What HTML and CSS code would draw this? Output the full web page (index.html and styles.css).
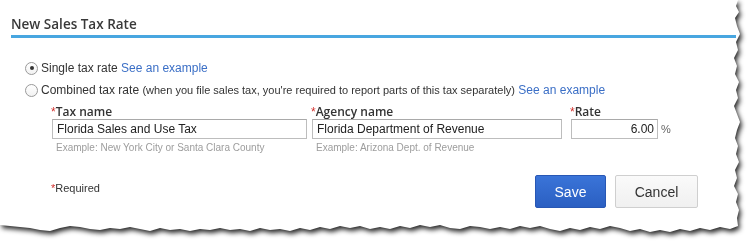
FILE: index.html
```html
<!DOCTYPE html>
<html>
<head>
<meta charset="utf-8">
<link rel="stylesheet" href="styles.css">
</head>
<body>
<div class="shadow">
  <div class="paper">
    <div class="header"><h1 class="title">New Sales Tax Rate</h1></div>
    <div class="options">
      <label class="option"><span class="radio checked"></span><span>Single tax rate <a class="link">See an example</a></span></label>
      <label class="option"><span class="radio"></span><span>Combined tax rate <span class="note">(when you file sales tax, you're required to report parts of this tax separately)</span> <a class="link">See an example</a></span></label>
    </div>
    <div class="fields">
      <div class="field f-name">
        <div class="label"><span class="req">*</span>Tax name</div>
        <div class="input">Florida Sales and Use Tax</div>
        <div class="hint">Example: New York City or Santa Clara County</div>
      </div>
      <div class="field f-agency">
        <div class="label"><span class="req">*</span>Agency name</div>
        <div class="input">Florida Department of Revenue</div>
        <div class="hint">Example: Arizona Dept. of Revenue</div>
      </div>
      <div class="field f-rate">
        <div class="label"><span class="req">*</span>Rate</div>
        <div class="rate-row"><div class="input num">6.00</div><span class="pct">%</span></div>
      </div>
    </div>
    <div class="footer">
      <div class="required"><span class="req">*</span>Required</div>
      <div class="buttons">
        <button class="btn primary">Save</button>
        <button class="btn secondary">Cancel</button>
      </div>
    </div>
  </div>
</div>
</body>
</html>
```

FILE: styles.css
```css
html, body {
  margin: 0;
  padding: 0;
  background: #ffffff;
  width: 750px;
  height: 248px;
  overflow: hidden;
}
body {
  font-family: "Liberation Sans", Arial, sans-serif;
  color: #333;
}
.shadow {
  width: 750px;
  height: 248px;
  filter: drop-shadow(2px 3px 2.5px rgba(0,0,0,0.85));
}
.paper {
  width: 742px;
  height: 238px;
  background: #fff;
  display: flex;
  flex-direction: column;
  clip-path: polygon(0px 0px, 738px 0px, 736px 6px, 739px 12px, 735px 18px, 737px 26px, 740px 34px, 736px 42px, 738px 50px, 734px 58px, 737px 66px, 735px 74px, 739px 82px, 736px 90px, 738px 98px, 734px 106px, 737px 114px, 740px 122px, 737px 130px, 735px 138px, 738px 146px, 736px 154px, 739px 162px, 735px 170px, 737px 178px, 734px 186px, 738px 194px, 736px 202px, 739px 210px, 737px 218px, 738px 226px, 730px 229px, 720px 227px, 710px 230px, 700px 228px, 690px 231px, 680px 229px, 670px 232px, 660px 230px, 650px 232px, 640px 229px, 630px 231px, 620px 228px, 610px 226px, 600px 229px, 590px 227px, 580px 230px, 570px 228px, 560px 231px, 550px 229px, 540px 226px, 530px 228px, 520px 226px, 510px 229px, 500px 227px, 490px 229px, 480px 227px, 470px 226px, 460px 229px, 450px 228px, 440px 225px, 430px 227px, 420px 225px, 410px 228px, 400px 226px, 390px 229px, 380px 227px, 370px 229px, 360px 226px, 350px 228px, 340px 226px, 330px 229px, 320px 227px, 310px 230px, 300px 228px, 290px 231px, 280px 229px, 270px 230px, 260px 228px, 250px 231px, 240px 229px, 230px 230px, 220px 228px, 210px 230px, 200px 229px, 190px 231px, 180px 229px, 170px 230px, 160px 228px, 150px 231px, 140px 229px, 130px 227px, 120px 229px, 110px 228px, 100px 230px, 90px 229px, 80px 227px, 70px 226px, 60px 228px, 50px 231px, 40px 230px, 30px 228px, 20px 227px, 10px 226px, 0px 225px);
}
.header {
  margin: 0 6px 0 11px;
  border-bottom: 3px solid #48a6e0;
  box-sizing: border-box;
  height: 38px;
}
.title {
  margin: 0;
  padding-top: 15px;
  font-family: "Open Sans", sans-serif;
  font-weight: 600;
  font-size: 13.5px;
  line-height: 18px;
  color: #393939;
}
.options {
  display: flex;
  flex-direction: column;
  padding: 19px 0 0 25px;
}
.option {
  display: flex;
  align-items: center;
  height: 22px;
  font-size: 12px;
  color: #333;
}
.radio {
  width: 11px;
  height: 11px;
  border: 1px solid #9a9a9a;
  border-radius: 50%;
  margin-right: 3px;
  display: flex;
  align-items: center;
  justify-content: center;
  background: linear-gradient(#fff, #f2f2f2);
  flex: none;
}
.radio.checked::after {
  content: "";
  width: 4px;
  height: 4px;
  border-radius: 50%;
  background: #333;
}
.note {
  font-size: 11px;
}
.link {
  color: #3b6fc6;
}
.fields {
  display: flex;
  padding: 4px 0 0 51px;
}
.field {
  display: flex;
  flex-direction: column;
}
.f-name { width: 256px; margin-right: 4px; }
.f-agency { width: 251px; margin-right: 8px; }
.label {
  font-family: "Open Sans", sans-serif;
  font-weight: 600;
  font-size: 12px;
  line-height: 14px;
  height: 14px;
  color: #333;
  margin-bottom: 0;
}
.req {
  color: #d3312d;
  font-family: "Liberation Sans", Arial, sans-serif;
  font-weight: normal;
}
.input {
  height: 20px;
  box-sizing: border-box;
  border: 1px solid #bdbdbd;
  border-top-color: #a9a9a9;
  margin-left: 1px;
  padding: 0 0 0 4px;
  font-size: 12px;
  line-height: 18px;
  color: #222;
  background: #fff;
}
.hint {
  font-size: 10px;
  line-height: 12px;
  color: #9d9d9d;
  padding-left: 5px;
  margin-top: 3px;
}
.rate-row {
  display: flex;
  align-items: center;
}
.input.num {
  width: 87px;
  text-align: right;
  padding: 0 3px 0 0;
}
.pct {
  font-size: 11px;
  color: #666;
  margin-left: 3px;
}
.footer {
  display: flex;
  justify-content: space-between;
  align-items: flex-start;
  padding: 21px 0 0 51px;
  width: 647px;
}
.required {
  font-size: 11px;
  color: #333;
  margin-top: 7px;
}
.buttons {
  display: flex;
  gap: 9px;
}
.btn {
  height: 33px;
  font-family: "Liberation Sans", Arial, sans-serif;
  font-size: 14px;
  border-radius: 2px;
  padding: 0;
}
.primary {
  width: 71px;
  color: #fff;
  background: linear-gradient(#3a74d8, #2b5fc2);
  border: 1px solid #2857b4;
}
.secondary {
  width: 83px;
  color: #333;
  background: linear-gradient(#fafafa, #f0f0f0);
  border: 1px solid #cfcfcf;
}
```
